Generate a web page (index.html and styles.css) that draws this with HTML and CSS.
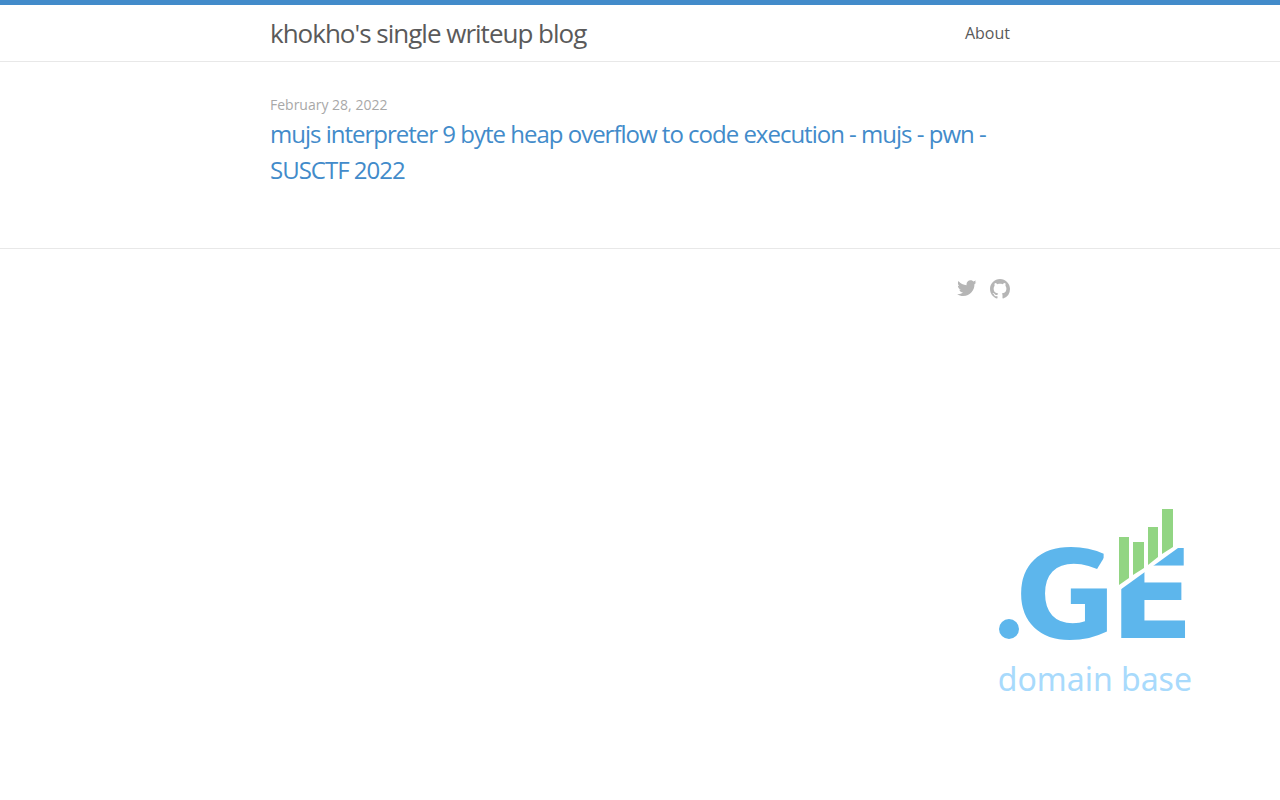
FILE: index.html
```
<!DOCTYPE html>
<html lang="en">
<head>
    <meta charset="UTF-8">
    <meta name="viewport" content="width=device-width, initial-scale=1.0">
    <title>khokho's single writeup blog</title>
    <link rel="stylesheet" href="styles.css">
</head>
<body>
    <header class="site-header">
        <div class="wrapper header-row">
            <a class="site-title" href="index.html">khokho's single writeup blog</a>
            <nav class="site-nav">
                <a class="page-link" href="about.html">About</a>
            </nav>
        </div>
    </header>

    <main class="page-content">
        <div class="wrapper">
            <ul class="post-list">
                <li>
                    <span class="post-meta">February 28, 2022</span>
                    <h2>
                        <a class="post-link" href="mujs.html">mujs interpreter 9 byte heap overflow to code execution - mujs - pwn - SUSCTF 2022</a>
                    </h2>
                </li>
            </ul>
        </div>
    </main>

    <footer class="site-footer">
        <div class="wrapper social-links">
            <a href="#" aria-label="Twitter">
                <svg class="icon" viewBox="2 1 23 23" aria-hidden="true">
                    <path d="M23.44 4.83c-.8.37-1.5.38-2.22.02.93-.56.98-.96 1.32-2.02-.88.52-1.86.9-2.9 1.1-.82-.88-2-1.43-3.3-1.43-2.5 0-4.55 2.04-4.55 4.54 0 .36.03.7.1 1.04-3.77-.2-7.12-2-9.36-4.75-.4.67-.6 1.45-.6 2.3 0 1.56.8 2.95 2 3.77-.74-.03-1.44-.23-2.05-.57v.06c0 2.2 1.56 4.03 3.64 4.44-.67.2-1.37.2-2.06.08.58 1.8 2.26 3.12 4.25 3.16C5.78 18.1 3.37 18.74 1 18.46c2 1.3 4.4 2.04 6.97 2.04 8.35 0 12.92-6.92 12.92-12.93 0-.2 0-.4-.02-.6.9-.63 1.96-1.22 2.56-2.14z"/>
                </svg>
            </a>
            <a href="#" aria-label="GitHub">
                <svg class="icon icon-github" viewBox="0 0 16 16" aria-hidden="true">
                    <path d="M8 0C3.58 0 0 3.58 0 8c0 3.54 2.29 6.53 5.47 7.59.4.07.55-.17.55-.38 0-.19-.01-.82-.01-1.49-2.01.37-2.53-.49-2.69-.94-.09-.23-.48-.94-.82-1.13-.28-.15-.68-.52-.01-.53.63-.01 1.08.58 1.23.82.72 1.21 1.87.87 2.33.66.07-.52.28-.87.51-1.07-1.78-.2-3.64-.89-3.64-3.95 0-.87.31-1.59.82-2.15-.08-.2-.36-1.02.08-2.12 0 0 .67-.21 2.2.82.64-.18 1.32-.27 2-.27s1.36.09 2 .27c1.53-1.04 2.2-.82 2.2-.82.44 1.1.16 1.92.08 2.12.51.56.82 1.27.82 2.15 0 3.07-1.87 3.75-3.65 3.95.29.25.54.73.54 1.48 0 1.07-.01 1.93-.01 2.2 0 .21.15.46.55.38A8.01 8.01 0 0 0 16 8c0-4.42-3.58-8-8-8z"/>
                </svg>
            </a>
        </div>
    </footer>

    <aside class="domain-badge">
        <svg class="domain-logo" viewBox="0 0 192 132">
            <circle class="logo-blue" cx="10" cy="120" r="10"/>
            <text class="logo-letter" x="16" y="129">G</text>
            <text class="logo-letter" x="111" y="129">E</text>
            <!-- slants the end of the G -->
            <polygon class="logo-cut" points="106,47 112,40 112,67 95,65"/>
            <!-- cuts the corner off the E above the chart -->
            <polygon class="logo-cut" points="118,0 179,39 121,81 118,81"/>
            <polygon class="logo-green" points="120,28 130,28 130,69 120,76"/>
            <polygon class="logo-green" points="134,33 145,33 145,59 134,66"/>
            <polygon class="logo-green" points="149,18 159,18 159,48 149,56"/>
            <polygon class="logo-green" points="163,0 174,0 174,38 163,45"/>
        </svg>
        <p class="domain-name">domain base</p>
    </aside>
</body>
</html>
```
FILE: styles.css
```
* {
    margin: 0;
    padding: 0;
    box-sizing: border-box;
}

body {
    display: flex;
    flex-direction: column;
    min-height: 100vh;
    font-family: "Open Sans", sans-serif;
    font-size: 16px;
    line-height: 1.5;
    color: #111;
    background-color: #fff;
}

a {
    text-decoration: none;
}

.wrapper {
    width: 100%;
    max-width: 800px;
    margin: 0 auto;
    padding: 0 30px;
}

/* Header */
.site-header {
    border-top: 5px solid #428bca;
    border-bottom: 1px solid #e8e8e8;
}

.header-row {
    display: flex;
    justify-content: space-between;
    min-height: 56px;
    line-height: 56px;
}

.site-title {
    font-size: 26px;
    letter-spacing: -1px;
    color: #5a5a5a;
}

.page-link {
    color: #5a5a5a;
}

/* Posts */
.page-content {
    padding: 32px 0 60px;
}

.post-list {
    list-style: none;
}

.post-meta {
    display: block;
    font-size: 14px;
    line-height: 22px;
    color: #a8a8a8;
}

.post-link {
    display: block;
    font-size: 24px;
    font-weight: 400;
    letter-spacing: -1px;
    color: #428bca;
}

/* Footer */
.site-footer {
    border-top: 1px solid #e8e8e8;
    padding: 30px 0;
}

.social-links {
    display: flex;
    justify-content: flex-end;
    gap: 12px;
}

.icon {
    display: block;
    width: 20px;
    height: 20px;
    overflow: visible;
    fill: #b5b5b5;
}

/* Domain badge */
.domain-badge {
    align-self: flex-end;
    margin-top: auto;
    padding: 0 88px 97px 0;
    text-align: center;
}

.domain-logo {
    display: block;
    width: 192px;
    height: 132px;
    margin: 0 auto 14px;
    overflow: visible;
}

.logo-blue,
.logo-letter {
    fill: #5db6ec;
}

.logo-letter {
    font-family: "DejaVu Sans", sans-serif;
    font-size: 123px;
    font-weight: 700;
}

.logo-cut {
    fill: #fff;
}

.logo-green {
    fill: #92d583;
}

.domain-name {
    font-family: "Noto Sans", sans-serif;
    font-size: 32px;
    line-height: 48px;
    color: #a8dafc;
}
```
